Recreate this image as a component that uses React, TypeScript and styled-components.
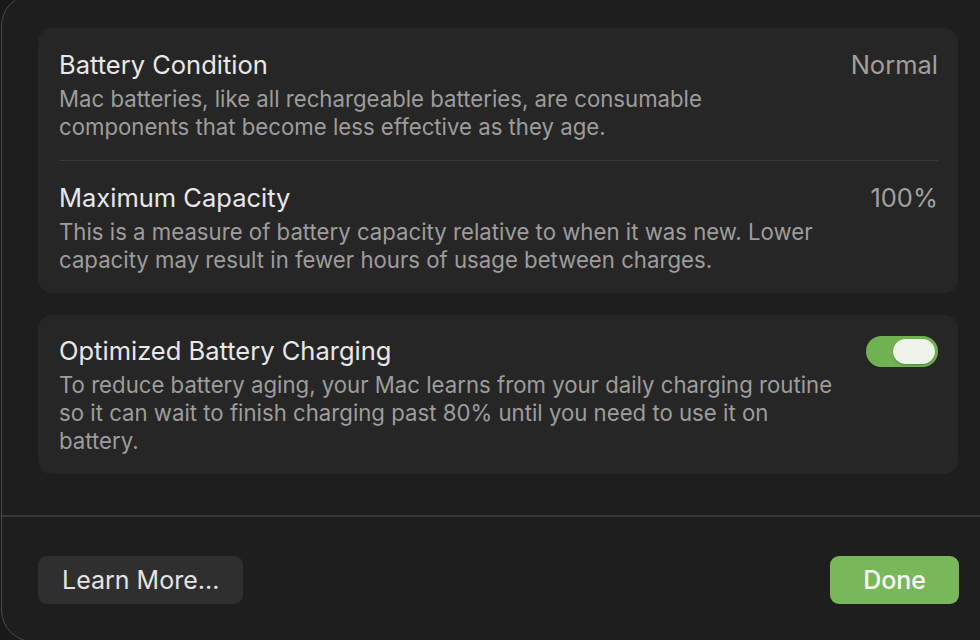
import styled, {createGlobalStyle} from "styled-components";
import {FC, ReactNode} from "react";

const GlobalStyle = createGlobalStyle`
  html, body {
    margin: 0;
    padding: 0;
    background: #191919;
    overflow: hidden;
  }
  body {
    font-family: Inter, "Noto Sans", "Liberation Sans", sans-serif;
    -webkit-font-smoothing: antialiased;
  }
`;

const Sheet = styled.div`
  box-sizing: border-box;
  width: 1010px;
  height: 648px;
  margin: -6px 0 0 1px;
  background: #1e1e1e;
  border: 1px solid #4a4a4a;
  border-radius: 32px;
  display: flex;
  flex-direction: column;
`;

const Content = styled.div`
  display: flex;
  flex-direction: column;
  gap: 22px;
  padding: 33px 0 0 36px;
  width: 920px;
`;

const Card = styled.section`
  background: #262626;
  border-radius: 14px;
  padding: 0 20px 0 21px;
`;

const Row = styled.div<{ $top: number; $bottom: number }>`
  display: flex;
  align-items: flex-start;
  gap: 24px;
  padding: ${({$top, $bottom}) => `${$top}px 0 ${$bottom}px`};
`;

const Separator = styled.hr`
  border: none;
  height: 1px;
  margin: 0;
  background: #383838;
`;

const TextBlock = styled.div`
  flex: 1;
  display: flex;
  flex-direction: column;
  gap: 5px;
`;

const Title = styled.div`
  font-size: 25.5px;
  line-height: 30px;
  color: #e8e8e8;
`;

const Description = styled.div`
  font-size: 22.2px;
  line-height: 28px;
  color: #9d9d9d;
  white-space: nowrap;
`;

const Value = styled.div`
  font-size: 25.5px;
  line-height: 30px;
  color: #a0a0a0;
`;

const Toggle = styled.div<{ $on: boolean }>`
  box-sizing: border-box;
  width: 72px;
  height: 31px;
  border-radius: 16px;
  background: ${({$on}) => ($on ? "#6fb24f" : "#3a3a3a")};
  padding: 3px;
  display: flex;
  justify-content: ${({$on}) => ($on ? "flex-end" : "flex-start")};
`;

const Knob = styled.div`
  width: 42px;
  height: 25px;
  border-radius: 13px;
  background: #eef4ea;
  box-shadow: 0 1px 2px rgba(0, 0, 0, 0.25);
`;

const Divider = styled.hr`
  border: none;
  height: 2px;
  margin: 41px 0 0;
  background: #373737;
`;

const Footer = styled.div`
  display: flex;
  justify-content: space-between;
  align-items: center;
  padding: 39px 0 0 36px;
  width: 921px;
`;

const Button = styled.button<{ $primary?: boolean }>`
  height: 48px;
  border: none;
  border-radius: 9px;
  font-family: inherit;
  font-size: 25px;
  padding: ${({$primary}) => ($primary ? "0 33px" : "0 24px")};
  background: ${({$primary}) => ($primary ? "#79b85a" : "#2f2f2f")};
  color: ${({$primary}) => ($primary ? "#ffffff" : "#e4e4e4")};
  font-weight: ${({$primary}) => ($primary ? 500 : 400)};
`;

interface InfoRowProps {
    title: string;
    value?: string;
    top: number;
    bottom: number;
    children: ReactNode;
    control?: ReactNode;
}

const InfoRow: FC<InfoRowProps> = ({title, value, top, bottom, children, control}) => (
    <Row $top={top} $bottom={bottom}>
        <TextBlock>
            <Title>{title}</Title>
            <Description>{children}</Description>
        </TextBlock>
        {value && <Value>{value}</Value>}
        {control}
    </Row>
);

const App = () => {
    return (
        <>
            <GlobalStyle/>
            <Sheet>
                <Content>
                    <Card>
                        <InfoRow top={22} bottom={19} title="Battery Condition" value="Normal">
                            Mac batteries, like all rechargeable batteries, are consumable<br/>
                            components that become less effective as they age.
                        </InfoRow>
                        <Separator/>
                        <InfoRow top={22} bottom={19} title="Maximum Capacity" value="100%">
                            This is a measure of battery capacity relative to when it was new. Lower<br/>
                            capacity may result in fewer hours of usage between charges.
                        </InfoRow>
                    </Card>
                    <Card>
                        <InfoRow
                            top={21}
                            bottom={19}
                            title="Optimized Battery Charging"
                            control={<Toggle $on><Knob/></Toggle>}
                        >
                            To reduce battery aging, your Mac learns from your daily charging routine<br/>
                            so it can wait to finish charging past 80% until you need to use it on<br/>
                            battery.
                        </InfoRow>
                    </Card>
                </Content>
                <Divider/>
                <Footer>
                    <Button>Learn More...</Button>
                    <Button $primary>Done</Button>
                </Footer>
            </Sheet>
        </>
    );
};

export default App;
